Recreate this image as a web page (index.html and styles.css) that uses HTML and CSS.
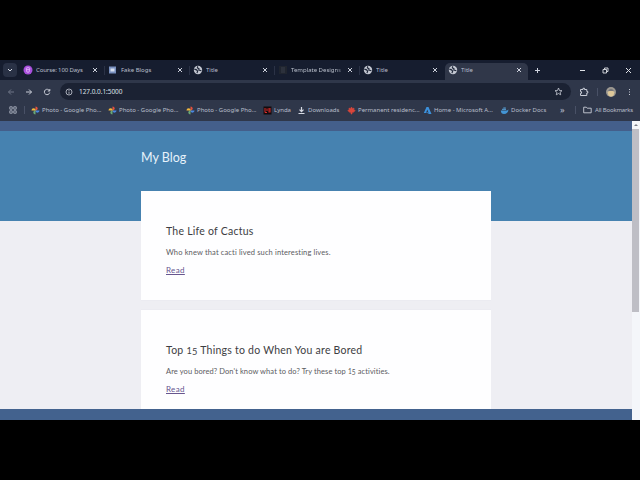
FILE: index.html
```
<!DOCTYPE html>
<html lang="en">
<head>
<meta charset="utf-8">
<title>Title</title>
<link rel="stylesheet" href="styles.css">
</head>
<body>
<svg class="defs" width="0" height="0">
  <symbol id="globe" viewBox="0 0 10 10"><circle cx="5" cy="5" r="4.2" fill="#c3c7d1"/><path d="M1.3 4.2 3.6 4.8 4.6 6.2 4 8.2M4.6 1.2 4.4 2.8 6 3.7 5.8 5 8.4 5.8" fill="none" stroke="#222a3c" stroke-width="1.2"/></symbol>
  <symbol id="close" viewBox="0 0 6 6"><path d="M1 1 5 5M5 1 1 5" stroke="#cdd1dc" stroke-width="1" fill="none"/></symbol>
  <symbol id="photos" viewBox="0 0 10 10"><path d="M5 5V.5A2.4 2.4 0 0 1 5 5.3Z" fill="#e2513d"/><path d="M5 5H9.5A2.4 2.4 0 0 1 4.7 5Z" fill="#4a87e0"/><path d="M5 5V9.5A2.4 2.4 0 0 1 5 4.7Z" fill="#69a875"/><path d="M5 5H.5A2.4 2.4 0 0 1 5.3 5Z" fill="#f1b73d"/></symbol>
</svg>
<div class="browser">
  <div class="tabs">
    <div class="search"><svg width="6" height="6" viewBox="0 0 6 6"><path d="M1 2 3 4 5 2" fill="none" stroke="#d5d9e2"/></svg></div>
    <div class="tab"><svg class="fav" viewBox="0 0 10 10"><circle cx="5" cy="5" r="4.5" fill="#a84fdc"/><path d="M3.2 3.2Q5 1.8 6.8 3.2L6.2 6.8Q5 8 3.8 6.8ZM3.5 4.6H6.5" fill="none" stroke="#e3bcf6" stroke-width=".8"/></svg><span class="label l1">Course: 100 Days</span><svg class="x"><use href="#close"/></svg></div>
    <div class="tab"><svg class="fav" viewBox="0 0 10 10"><rect x="1" y="1.5" width="7" height="7" fill="#7890bf"/><path d="M2.5 3.5H6.5V6.5H2.5Z" fill="#d6dfef"/></svg><span class="label l2">Fake Blogs</span><svg class="x"><use href="#close"/></svg></div>
    <div class="tab"><svg class="fav"><use href="#globe"/></svg><span class="label">Title</span><svg class="x"><use href="#close"/></svg></div>
    <div class="tab"><svg class="fav" viewBox="0 0 10 10"><rect x="1" y="1" width="8" height="8" fill="#20252f"/><path d="M3 3H7M3 5H7M3 7H7" stroke="#393e4a"/></svg><span class="label l4">Template Designs</span><svg class="x"><use href="#close"/></svg></div>
    <div class="tab"><svg class="fav"><use href="#globe"/></svg><span class="label">Title</span><svg class="x"><use href="#close"/></svg></div>
    <div class="tab active"><svg class="fav"><use href="#globe"/></svg><span class="label">Title</span><svg class="x"><use href="#close"/></svg></div>
    <svg class="plus" width="7" height="7" viewBox="0 0 7 7"><path d="M3.5 1V6M1 3.5H6" stroke="#cdd1dc" fill="none"/></svg>
    <div class="window">
      <svg width="7" height="7" viewBox="0 0 7 7"><path d="M1 3.5H6" stroke="#dfe2e8"/></svg>
      <svg width="7" height="7" viewBox="0 0 7 7"><path d="M1 2.5H4.5V6H1ZM2.5 2V1H6V4.5H5" stroke="#dfe2e8" stroke-width=".9" fill="none"/></svg>
      <svg width="7" height="7" viewBox="0 0 7 7"><path d="M1 1 6 6M6 1 1 6" stroke="#dfe2e8"/></svg>
    </div>
  </div>
  <div class="toolbar">
    <div class="nav">
      <svg width="8" height="8" viewBox="0 0 8 8"><path d="M7 4H1.5M4 1.5 1.5 4 4 6.5" stroke="#6e7586" fill="none"/></svg>
      <svg width="8" height="8" viewBox="0 0 8 8"><path d="M1 4H6.5M4 1.5 6.5 4 4 6.5" stroke="#c9cdd7" fill="none"/></svg>
      <svg width="8" height="8" viewBox="0 0 8 8"><path d="M6.5 2.8A2.7 2.7 0 1 0 6.7 4.6M6.8 1V3H4.8" stroke="#c9cdd7" fill="none"/></svg>
    </div>
    <div class="address">
      <svg width="8" height="8" viewBox="0 0 8 8"><circle cx="4" cy="4" r="3" stroke="#c9cdd7" stroke-width=".8" fill="none"/><path d="M4 3.6V5.8M4 2.1V3" stroke="#c9cdd7" stroke-width=".8"/></svg>
      <span class="url">127.0.0.1:5000</span>
      <svg class="star" width="9" height="9" viewBox="0 0 9 9"><path d="M4.5 1 5.5 3.5 8 3.7 6.1 5.3 6.7 7.8 4.5 6.5 2.3 7.8 2.9 5.3 1 3.7 3.5 3.5Z" stroke="#c9cdd7" stroke-width=".8" fill="none"/></svg>
    </div>
    <svg class="ext" width="10" height="10" viewBox="0 0 10 10"><path d="M1.5 2.5H4V1.3H5.5V2.5H7.8V4.5H8.8V6H7.8V8.5H1.5V6.3H2.5V4.7H1.5Z" stroke="#c9cdd7" fill="none"/></svg>
    <i class="line"></i>
    <svg class="avatar" width="10" height="10" viewBox="0 0 10 10"><circle cx="5" cy="5" r="5" fill="#9d9992"/><path d="M1.5 5Q5 2 8.5 5L7.5 8.5Q5 10.5 2.5 8.5Z" fill="#dec899"/><path d="M2 4Q5-.5 8 4Z" fill="#77777a"/></svg>
    <svg width="3" height="8" viewBox="0 0 3 8"><path d="M1 1H2V2H1ZM1 3.5H2V4.5H1ZM1 6H2V7H1Z" fill="#c9cdd7"/></svg>
  </div>
  <div class="bookmarks">
    <svg class="apps" width="8" height="8" viewBox="0 0 8 8"><path d="M.8.8H3.2V3.2H.8ZM4.8.8H7.2V3.2H4.8ZM.8 4.8H3.2V7.2H.8ZM4.8 4.8H7.2V7.2H4.8Z" fill="none" stroke="#a9afbd" stroke-width=".9"/></svg>
    <i class="line"></i>
    <div class="bm b1"><svg><use href="#photos"/></svg><span>Photo - Google Pho...</span></div>
    <div class="bm b2"><svg><use href="#photos"/></svg><span>Photo - Google Pho...</span></div>
    <div class="bm b3"><svg><use href="#photos"/></svg><span>Photo - Google Pho...</span></div>
    <div class="bm b4"><svg viewBox="0 0 9 9"><rect x=".5" y=".5" width="8" height="8" fill="#130b0d"/><path d="M2 2V6.5H4M4 2.5V5M6 2V6.5M7 2V6.5" fill="none" stroke="#d92d2c"/></svg><span>Lynda</span></div>
    <div class="bm b5"><svg viewBox="0 0 9 9"><path d="M4.5 1V5.5M2.5 3.7 4.5 5.7 6.5 3.7M1.5 7.5H7.5" fill="none" stroke="#d5d9e2" stroke-width="1.2"/></svg><span>Downloads</span></div>
    <div class="bm b6"><svg viewBox="0 0 9 9"><path d="M4.5 1 5.5 2.8 7 2 6.8 3.8 8.2 4.5 6.5 6.3H5V8H4V6.3H2.5L.8 4.5 2.2 3.8 2 2 3.5 2.8Z" fill="#d9463b" stroke="#d9463b" stroke-width=".6"/></svg><span>Permanent residenc...</span></div>
    <div class="bm b7"><svg viewBox="0 0 9 9"><path d="M3.5 1H5.5L8.5 8H6L4.3 3.5 3 7H.8Z" fill="#3c91dc"/><path d="M2.5 6 5.5 6.5 6.2 8Z" fill="#3c91dc"/></svg><span>Home - Microsoft A...</span></div>
    <div class="bm b8"><svg viewBox="0 0 9 9"><path d="M.8 4.5H7L8.5 3.5Q8 7.8 4 8 1 8 .8 4.5Z" fill="#4395d5"/><path d="M2 3.3H6M3.3 2H5.8" stroke="#5ba5dd"/></svg><span>Docker Docs</span></div>
    <span class="more">»</span>
    <i class="line"></i>
    <svg class="folder" width="9" height="8" viewBox="0 0 9 8"><path d="M.7 1.2H3.3L4.2 2.2H8.2V6.8H.7Z" fill="none" stroke="#c9cdd7" stroke-width=".9"/></svg>
    <span class="all">All Bookmarks</span>
  </div>
  <div class="viewport">
    <main class="page">
      <header class="hero"><h1>My Blog</h1></header>
      <section class="posts">
        <article class="card"><h2 class="h-a">The Life of Cactus</h2><p class="p-a">Who knew that cacti lived such interesting lives.</p><a>Read</a></article>
        <article class="card"><h2 class="h-b">Top <span class="num">1<span class="low">5</span></span> Things to do When You are Bored</h2><p class="p-b">Are you bored? Don't know what to do? Try these top <span class="num">1<span class="low">5</span></span> activities.</p><a>Read</a></article>
      </section>
      <footer></footer>
    </main>
    <aside class="scroll"><svg width="8" height="8" viewBox="0 0 8 8"><path d="M2 5 4 3 6 5Z" fill="#777b86"/></svg><div class="thumb"></div></aside>
  </div>
</div>
</body>
</html>
```
FILE: styles.css
```
* { box-sizing: border-box; }
body { margin: 0; padding: 60px 0; height: 480px; background: #000; overflow: hidden; font-family: "Noto Sans", sans-serif; }
svg { display: block; flex: none; }
.defs { position: absolute; }
.browser { height: 360px; display: flex; flex-direction: column; color: #b9bfcb; font-size: 6px; line-height: 8px; white-space: nowrap; }
.tabs { height: 20px; flex: none; display: flex; align-items: center; background: #161d2f; padding-left: 3px; }
.search { width: 14px; height: 14px; border-radius: 4px; background: #293145; display: grid; place-items: center; margin-right: 3px; }
.tab { width: 85px; height: 17px; align-self: flex-end; padding: 0 4px 3px 3px; display: flex; align-items: center; position: relative; }
.tab:not(.active)::after { content: ""; position: absolute; right: 0; top: 3px; height: 9px; border-right: 1px solid #2b3246; }
.tab:nth-child(6)::after { display: none; }
.tab.active { background: #303749; border-radius: 5px 5px 0 0; width: 83px; padding-right: 3px; }
.fav { width: 10px; height: 10px; margin-right: 3px; }
.tab .label { flex: 1; overflow: hidden; margin-right: 3px; }
.l1 { letter-spacing: -.12px; }
.l4 { -webkit-mask-image: linear-gradient(90deg, #000 85%, transparent); mask-image: linear-gradient(90deg, #000 85%, transparent); }
.x { width: 6px; height: 6px; margin-right: 3px; }
.plus { margin-left: 6px; }
.window { margin-left: auto; display: flex; gap: 16px; padding-right: 8px; }
.toolbar { height: 22px; flex: none; background: #2f374a; display: flex; align-items: center; padding: 1px 5px 0 7px; }
.nav { display: flex; gap: 10px; width: 53px; }
.address { width: 511px; height: 17px; border-radius: 9px; background: #1b2233; display: flex; align-items: center; padding: 0 8px 0 5px; }
.url { font-size: 6.5px; margin-left: 6px; color: #dce0e8; letter-spacing: -.05px; }
.star { margin-left: auto; }
.ext { margin-left: 8px; margin-right: 8px; }
.line { width: 1px; height: 8px; background: #495166; }
.avatar { margin: 0 12px 0 8px; }
.bookmarks { height: 19px; flex: none; background: #2f374a; display: flex; align-items: center; padding: 0 0 3px 9px; }
.apps { margin-right: 7px; }
.bm { display: flex; align-items: center; gap: 2px; flex: none; }
.bm svg { width: 9px; height: 9px; }
.b1 { width: 77px; margin-left: 6px; }
.b2 { width: 78px; }
.b3 { width: 77px; }
.b4 { width: 34px; }
.b5 { width: 50px; }
.b6 { width: 76px; }
.b7 { width: 77px; }
.b8 { width: 60px; }
.more { font-size: 9px; width: 15px; }
.folder { margin: 0 3px 0 7px; }
.all { letter-spacing: -.18px; }
.viewport { flex: 1; display: flex; min-height: 0; }
.page { flex: 1; display: flex; flex-direction: column; background: #eeeef3; font-family: Lato, sans-serif; }
.hero { height: 100px; flex: none; background: #4682b0; border-top: 10px solid #445f8b; padding: 18px 0 0 141px; }
h1, h2, p { margin: 0; font-weight: 400; }
h1 { color: #e7f2fb; font-size: 12.5px; line-height: 17px; }
.posts { flex: 1; min-height: 0; margin: -30px 0 0 141px; width: 350px; display: flex; flex-direction: column; gap: 10px; overflow: hidden; }
.card { height: 109px; flex: none; background: #fefeff; padding: 32px 25px 0; box-shadow: 0 0 1px #d8dce3; }
.card h2 { height: 16px; font-size: 10.5px; line-height: 16px; color: #3d3d42; letter-spacing: .24px; }
.card p { height: 10px; font-size: 7.5px; line-height: 10px; color: #5b5b61; margin-top: 9px; }
.p-a { letter-spacing: .14px; }
.p-b { letter-spacing: .09px; }
.card a { display: block; font-size: 8px; line-height: 10px; color: #67568f; text-decoration: underline; margin-top: 7px; letter-spacing: .35px; }
.num { font-size: .88em; line-height: 0; }
.low { position: relative; top: .15em; }
footer { height: 11px; flex: none; background: #43628e; }
.scroll { width: 8px; background: #f4f6fa; }
.thumb { width: 7px; height: 183px; background: #bebec5; }
```
